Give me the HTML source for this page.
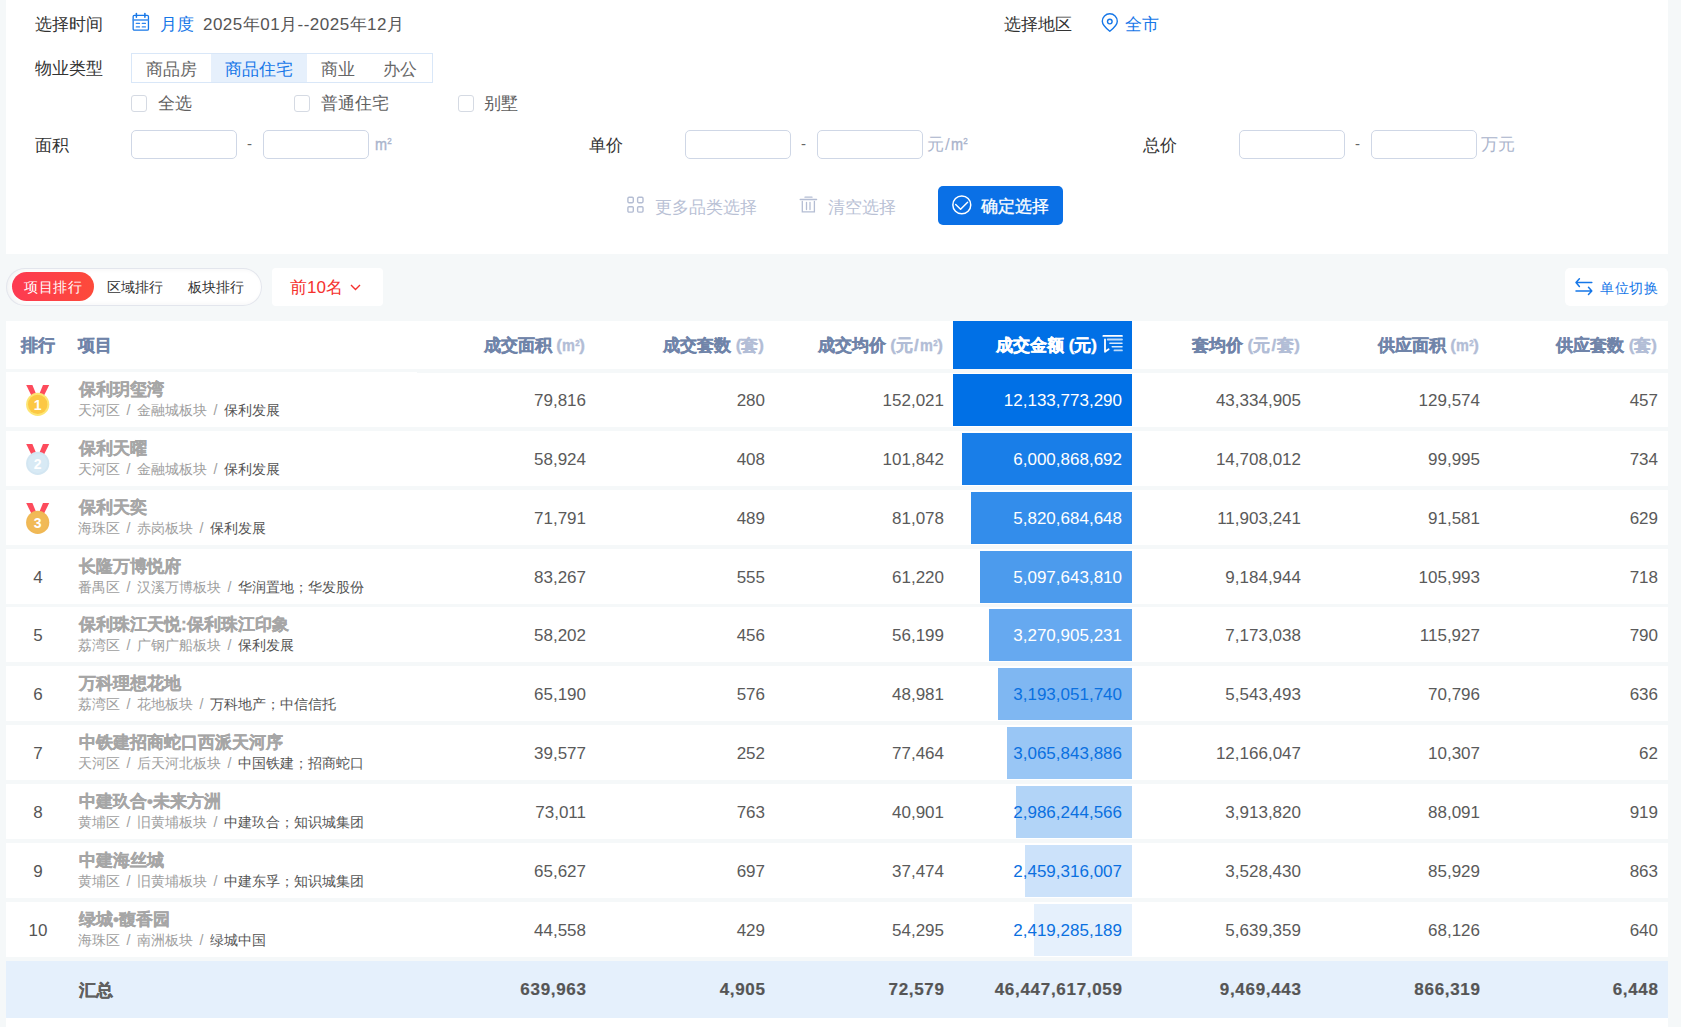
<!DOCTYPE html><html><head><meta charset="utf-8"><style>
*{box-sizing:border-box;margin:0;padding:0}
html,body{width:1681px;height:1027px;overflow:hidden}
body{position:relative;background:#f5f8f9;font-family:"Liberation Sans",sans-serif;color:#333;font-size:17px}
.a{position:absolute;white-space:nowrap}
.panel{position:absolute;left:6px;top:0;width:1662px;height:254px;background:#fff}
.lbl{font-size:17px;color:#333;line-height:20px}
.blue{color:#1677e8}
.seg{position:absolute;left:131px;top:53px;width:302px;height:30px;border:1px solid #d9e7f8;display:flex}
.seg div{height:28px;line-height:28px;padding:2px 14px 0;color:#666;font-size:17px}
.seg .on{background:#e6f0fc;color:#1677e8}
.cb{position:absolute;width:16px;height:16.5px;border:1px solid #d5dae3;border-radius:3px;background:#fff}
.cbt{font-size:17px;color:#606060;line-height:20px}
.inp{position:absolute;width:106px;height:29px;border:1px solid #cfd7e6;border-radius:5px;background:#fff}
.dash{font-size:15px;color:#666;line-height:20px}
.unit{font-size:17px;color:#aab4cc;line-height:20px}
.unit s{text-decoration:none;margin:0 1.5px 0 1px}
.btn2{font-size:17px;color:#b9c1d5;line-height:20px}
.ok{position:absolute;left:938px;top:186px;width:125px;height:39px;background:#0a70e6;border-radius:5px}
.pillwrap{position:absolute;left:6px;top:268px;width:256px;height:38px;border-radius:19px;background:#fff;box-shadow:inset 0 0 0 1px #e3e6ed, inset 3px 0 6px rgba(30,40,60,0.07)}
.pill{position:absolute;left:12px;top:272px;width:82px;height:29px;border-radius:15px;background:linear-gradient(90deg,#fd3a52,#fd4a3a);}
.tb{font-size:14px;line-height:18px}
.drop{position:absolute;left:272px;top:268px;width:111px;height:38px;background:#fff;border-radius:4px}
.unitbtn{position:absolute;left:1565px;top:268px;width:103px;height:38px;background:#fff;border-radius:5px}
.hdr{position:absolute;left:6px;top:321px;width:1662px;height:48px;background:#fff}
.ht{font-weight:bold;color:#7084a9;font-size:17px;line-height:20px;-webkit-text-stroke:0.35px currentColor}
.ht i{font-style:normal;color:#b2bdd6}
.ht s{text-decoration:none;margin:0 1.2px}
.hl{position:absolute;left:953px;top:321px;width:179px;height:48px;background:#0070e6}
.row{position:absolute;left:6px;width:1662px;height:55px;background:#fff}
.num{font-size:17px;color:#555;line-height:20px;text-align:right}
.pn{font-weight:bold;color:#a6a6a6;font-size:17px;line-height:20px;-webkit-text-stroke:0.3px currentColor}
.ps{font-size:14.2px;color:#9e9e9e;line-height:17px}
.ps s{text-decoration:none;display:inline-block;width:17px;text-align:center}
.ps b{font-weight:normal;color:#555}
.rk{font-size:17px;color:#555;line-height:20px;text-align:center;width:40px;padding-top:1.5px}
.bar{position:absolute;height:52px}
.sum{position:absolute;left:6px;top:961px;width:1662px;height:57px;background:#e5f0fc}
.sn{font-weight:bold;font-size:17px;color:#555;line-height:20px;text-align:right;letter-spacing:0.7px;margin-right:-0.7px;-webkit-text-stroke:0.2px #555}
.m2{display:inline-block;transform:scaleX(0.85);transform-origin:0 100%;margin-right:-0.2em;-webkit-text-stroke:0.4px currentColor}
.m2 u{text-decoration:none;position:relative;top:-0.55em;font-size:0.55em;margin-left:0.04em}
</style></head><body>
<div class="panel"></div>
<div class="a lbl" style="left:35px;top:15px">选择时间</div>
<svg class="a" style="left:131px;top:12px" width="20" height="21" viewBox="0 0 20 21" fill="none" stroke="#1677e8" stroke-linecap="round"><rect x="2.15" y="3.35" width="15.3" height="14.75" rx="1.2" stroke-width="1.3"/><line x1="2.2" y1="8" x2="17.4" y2="8" stroke-width="1.3" stroke="#3d8ef0"/><line x1="5.4" y1="1.6" x2="5.4" y2="5.3" stroke-width="1.5"/><line x1="13.9" y1="1.6" x2="13.9" y2="5.3" stroke-width="1.5"/><path d="M5.3 11.4 H8.5 M11.3 11.4 H14.4 M5.3 14.9 H8.5 M11.3 14.9 H14.4" stroke-width="1.3" stroke="#2f86ee"/></svg>
<div class="a lbl blue" style="left:160px;top:15px">月度</div>
<div class="a lbl" style="left:203px;top:15px;color:#555;font-size:17px;letter-spacing:0.48px">2025年01月--2025年12月</div>
<div class="a lbl" style="left:1004px;top:15px">选择地区</div>
<svg class="a" style="left:1100px;top:12px" width="20" height="21" viewBox="0 0 20 21" fill="none" stroke="#1677e8" stroke-width="1.4"><path d="M9.8 19.3 C6 16.3 2.3 13 2.3 9.3 A7.5 7.5 0 0 1 17.3 9.3 C17.3 13 13.6 16.3 9.8 19.3 Z" stroke-linejoin="round"/><circle cx="9.8" cy="9.6" r="2.3"/></svg>
<div class="a lbl blue" style="left:1125px;top:15px">全市</div>
<div class="a lbl" style="left:35px;top:59px">物业类型</div>
<div class="seg"><div>商品房</div><div class="on">商品住宅</div><div>商业</div><div>办公</div></div>
<div class="cb" style="left:131px;top:95px"></div><div class="a cbt" style="left:158px;top:94px">全选</div>
<div class="cb" style="left:294px;top:95px"></div><div class="a cbt" style="left:321px;top:94px">普通住宅</div>
<div class="cb" style="left:458px;top:95px"></div><div class="a cbt" style="left:484px;top:94px">别墅</div>
<div class="a lbl" style="left:35px;top:135.5px">面积</div>
<div class="inp" style="left:131px;top:130px"></div><div class="a dash" style="left:247px;top:133.5px">-</div><div class="inp" style="left:263px;top:130px"></div><div class="a unit" style="left:375px;top:134.5px"><span class="m2">m<u>2</u></span></div>
<div class="a lbl" style="left:589px;top:135.5px">单价</div><div class="inp" style="left:685px;top:130px"></div><div class="a dash" style="left:801px;top:133.5px">-</div><div class="inp" style="left:817px;top:130px"></div><div class="a unit" style="left:927px;top:134.5px">元<s>/</s><span class="m2">m<u>2</u></span></div>
<div class="a lbl" style="left:1143px;top:135.5px">总价</div><div class="inp" style="left:1239px;top:130px"></div><div class="a dash" style="left:1355px;top:133.5px">-</div><div class="inp" style="left:1371px;top:130px"></div><div class="a unit" style="left:1481px;top:134.5px">万元</div>
<svg class="a" style="left:626px;top:196px" width="19" height="18" viewBox="0 0 19 18" fill="none" stroke="#b4bdd3" stroke-width="1.4"><rect x="1.9" y="1.3" width="5.4" height="5.4" rx="1.1"/><rect x="11.6" y="1.3" width="5.4" height="5.4" rx="1.1"/><rect x="1.9" y="10.7" width="5.4" height="5.4" rx="1.1"/><rect x="11.6" y="10.7" width="5.4" height="5.4" rx="1.1"/></svg>
<div class="a btn2" style="left:655px;top:197.5px">更多品类选择</div>
<svg class="a" style="left:799px;top:195px" width="19" height="19" viewBox="0 0 19 19" fill="none" stroke="#b4bdd3" stroke-width="1.3" stroke-linecap="round"><path d="M6 2.2 H13"/><path d="M1.2 4.5 H17.6"/><path d="M3.3 6.3 V16.9 H15.4 V6.3"/><path d="M7.5 7.3 V14.6 M11 7.3 V14.6"/></svg>
<div class="a btn2" style="left:828px;top:197.5px">清空选择</div>
<div class="ok"></div>
<svg class="a" style="left:950px;top:193px" width="24" height="24" viewBox="0 0 24 24" fill="none" stroke="#fff" stroke-width="1.5" stroke-linecap="round" stroke-linejoin="round"><circle cx="11.8" cy="11.9" r="8.95"/><path d="M5.7 11.5 L10.6 16.2 L17.6 9.3"/></svg>
<div class="a lbl" style="left:981px;top:197px;color:#fff;-webkit-text-stroke:0.3px #fff">确定选择</div>
<div class="pillwrap"></div><div class="pill"></div>
<div class="a tb" style="left:24px;top:278px;color:#fff;letter-spacing:0.5px">项目排行</div>
<div class="a tb" style="left:107px;top:277.5px;color:#333">区域排行</div>
<div class="a tb" style="left:188px;top:277.5px;color:#333">板块排行</div>
<div class="drop"></div><div class="a lbl" style="left:290px;top:278px;color:#f5312e">前10名</div>
<svg class="a" style="left:350px;top:284px" width="11" height="7" viewBox="0 0 11 7" fill="none" stroke="#f5312e" stroke-width="1.4"><path d="M1 1 L5.5 5.5 L10 1"/></svg>
<div class="unitbtn"></div>
<svg class="a" style="left:1574px;top:276px" width="20" height="20" viewBox="0 0 20 20" fill="none" stroke="#1677e8" stroke-width="1.5" stroke-linecap="round" stroke-linejoin="round"><path d="M2 6.5 H17.8 M5.4 2.8 L2 6.5 L5.4 10.4"/><path d="M2 15.1 H17.8 M14.5 11.3 L17.8 15.1 L14.5 18.5"/></svg>
<div class="a tb" style="left:1600px;top:279px;color:#1677e8;letter-spacing:0.5px">单位切换</div>
<div class="hdr"></div><div class="hl"></div>
<div class="a ht" style="left:21px;top:336px">排行</div>
<div class="a ht" style="left:78px;top:336px">项目</div>
<div class="a ht" style="right:1096px;top:336px">成交面积<i> (<span class="m2">m<u>2</u></span>)</i></div>
<div class="a ht" style="right:917px;top:336px">成交套数<i> (套)</i></div>
<div class="a ht" style="right:738px;top:336px">成交均价<i> (元<s>/</s><span class="m2">m<u>2</u></span>)</i></div>
<div class="a ht" style="right:381px;top:336px">套均价<i> (元<s>/</s>套)</i></div>
<div class="a ht" style="right:202px;top:336px">供应面积<i> (<span class="m2">m<u>2</u></span>)</i></div>
<div class="a ht" style="right:24px;top:336px">供应套数<i> (套)</i></div>
<div class="a ht" style="right:584px;top:336px;color:#fff">成交金额 (元)</div>
<svg class="a" style="left:1102px;top:334px" width="21" height="20" viewBox="0 0 21 20" fill="none" stroke-linecap="round" stroke-linejoin="round"><path d="M1.3 1.9 H20" stroke="#fff" stroke-width="1.7"/><path d="M3 5.4 V17.8 L6.6 15.2" stroke="#fff" stroke-width="1.8"/><path d="M5.7 5.5 H20" stroke="rgba(255,255,255,0.75)" stroke-width="1.8"/><path d="M7.9 9.3 H20" stroke="rgba(255,255,255,0.85)" stroke-width="1.5"/><path d="M10.2 12.8 H20" stroke="rgba(255,255,255,0.85)" stroke-width="1.5"/><path d="M12.4 16.4 H20" stroke="rgba(255,255,255,0.75)" stroke-width="1.7"/></svg>
<div class="row" style="top:372px"></div>
<div class="bar" style="left:953px;top:374px;width:179px;background:rgba(0,112,230,1.00)"></div>
<div class="a" style="left:25px;top:385px"><svg class="medal" width="26" height="33" viewBox="0 0 26 33"><path d="M1.2 0 L7.4 0 L11.3 9.5 L6.6 11 Z" fill="#fd4b5c"/><path d="M24.2 0 L18 0 L14.1 9.5 L18.8 11 Z" fill="#fd4b5c"/><circle cx="12.7" cy="19.4" r="11.6" fill="#fde572"/><circle cx="12.7" cy="19.4" r="9.7" fill="#fcc843"/><text x="12.7" y="24.6" text-anchor="middle" font-family="Liberation Sans" font-weight="bold" font-size="14" fill="#fff">1</text></svg></div>
<div class="a pn" style="left:79px;top:380px">保利玥玺湾</div>
<div class="a ps" style="left:78px;top:402px">天河区<s>/</s>金融城板块<s>/</s><b>保利发展</b></div>
<div class="a num" style="right:1095px;top:391px;color:#5a5a5a">79,816</div>
<div class="a num" style="right:916px;top:391px;color:#5a5a5a">280</div>
<div class="a num" style="right:737px;top:391px;color:#5a5a5a">152,021</div>
<div class="a num" style="right:559px;top:391px;color:#fff">12,133,773,290</div>
<div class="a num" style="right:380px;top:391px;color:#5a5a5a">43,334,905</div>
<div class="a num" style="right:201px;top:391px;color:#5a5a5a">129,574</div>
<div class="a num" style="right:23px;top:391px;color:#5a5a5a">457</div>
<div class="row" style="top:431px"></div>
<div class="bar" style="left:962px;top:433px;width:170px;background:rgba(0,112,230,0.90)"></div>
<div class="a" style="left:25px;top:444px"><svg class="medal" width="26" height="33" viewBox="0 0 26 33"><path d="M1.2 0 L7.4 0 L11.3 9.5 L6.6 11 Z" fill="#fd4b5c"/><path d="M24.2 0 L18 0 L14.1 9.5 L18.8 11 Z" fill="#fd4b5c"/><circle cx="12.7" cy="19.4" r="11.6" fill="#d3e6f2"/><circle cx="12.7" cy="19.4" r="9.7" fill="#d8eaf5"/><text x="12.7" y="24.6" text-anchor="middle" font-family="Liberation Sans" font-weight="bold" font-size="14" fill="#fff">2</text></svg></div>
<div class="a pn" style="left:79px;top:439px">保利天曜</div>
<div class="a ps" style="left:78px;top:461px">天河区<s>/</s>金融城板块<s>/</s><b>保利发展</b></div>
<div class="a num" style="right:1095px;top:450px;color:#5a5a5a">58,924</div>
<div class="a num" style="right:916px;top:450px;color:#5a5a5a">408</div>
<div class="a num" style="right:737px;top:450px;color:#5a5a5a">101,842</div>
<div class="a num" style="right:559px;top:450px;color:#fff">6,000,868,692</div>
<div class="a num" style="right:380px;top:450px;color:#5a5a5a">14,708,012</div>
<div class="a num" style="right:201px;top:450px;color:#5a5a5a">99,995</div>
<div class="a num" style="right:23px;top:450px;color:#5a5a5a">734</div>
<div class="row" style="top:490px"></div>
<div class="bar" style="left:971px;top:492px;width:161px;background:rgba(0,112,230,0.80)"></div>
<div class="a" style="left:25px;top:503px"><svg class="medal" width="26" height="33" viewBox="0 0 26 33"><path d="M1.2 0 L7.4 0 L11.3 9.5 L6.6 11 Z" fill="#fd4b5c"/><path d="M24.2 0 L18 0 L14.1 9.5 L18.8 11 Z" fill="#fd4b5c"/><circle cx="12.7" cy="19.4" r="11.6" fill="#f0b855"/><circle cx="12.7" cy="19.4" r="9.7" fill="#f1ba57"/><text x="12.7" y="24.6" text-anchor="middle" font-family="Liberation Sans" font-weight="bold" font-size="14" fill="#fff">3</text></svg></div>
<div class="a pn" style="left:79px;top:498px">保利天奕</div>
<div class="a ps" style="left:78px;top:520px">海珠区<s>/</s>赤岗板块<s>/</s><b>保利发展</b></div>
<div class="a num" style="right:1095px;top:509px;color:#5a5a5a">71,791</div>
<div class="a num" style="right:916px;top:509px;color:#5a5a5a">489</div>
<div class="a num" style="right:737px;top:509px;color:#5a5a5a">81,078</div>
<div class="a num" style="right:559px;top:509px;color:#fff">5,820,684,648</div>
<div class="a num" style="right:380px;top:509px;color:#5a5a5a">11,903,241</div>
<div class="a num" style="right:201px;top:509px;color:#5a5a5a">91,581</div>
<div class="a num" style="right:23px;top:509px;color:#5a5a5a">629</div>
<div class="row" style="top:549px"></div>
<div class="bar" style="left:980px;top:551px;width:152px;background:rgba(0,112,230,0.70)"></div>
<div class="a rk" style="left:18px;top:566px">4</div>
<div class="a pn" style="left:79px;top:557px">长隆万博悦府</div>
<div class="a ps" style="left:78px;top:579px">番禺区<s>/</s>汉溪万博板块<s>/</s><b>华润置地；华发股份</b></div>
<div class="a num" style="right:1095px;top:568px;color:#5a5a5a">83,267</div>
<div class="a num" style="right:916px;top:568px;color:#5a5a5a">555</div>
<div class="a num" style="right:737px;top:568px;color:#5a5a5a">61,220</div>
<div class="a num" style="right:559px;top:568px;color:#fff">5,097,643,810</div>
<div class="a num" style="right:380px;top:568px;color:#5a5a5a">9,184,944</div>
<div class="a num" style="right:201px;top:568px;color:#5a5a5a">105,993</div>
<div class="a num" style="right:23px;top:568px;color:#5a5a5a">718</div>
<div class="row" style="top:607px"></div>
<div class="bar" style="left:989px;top:609px;width:143px;background:rgba(0,112,230,0.60)"></div>
<div class="a rk" style="left:18px;top:624px">5</div>
<div class="a pn" style="left:79px;top:615px">保利珠江天悦:保利珠江印象</div>
<div class="a ps" style="left:78px;top:637px">荔湾区<s>/</s>广钢广船板块<s>/</s><b>保利发展</b></div>
<div class="a num" style="right:1095px;top:626px;color:#5a5a5a">58,202</div>
<div class="a num" style="right:916px;top:626px;color:#5a5a5a">456</div>
<div class="a num" style="right:737px;top:626px;color:#5a5a5a">56,199</div>
<div class="a num" style="right:559px;top:626px;color:#fff">3,270,905,231</div>
<div class="a num" style="right:380px;top:626px;color:#5a5a5a">7,173,038</div>
<div class="a num" style="right:201px;top:626px;color:#5a5a5a">115,927</div>
<div class="a num" style="right:23px;top:626px;color:#5a5a5a">790</div>
<div class="row" style="top:666px"></div>
<div class="bar" style="left:998px;top:668px;width:134px;background:rgba(0,112,230,0.50)"></div>
<div class="a rk" style="left:18px;top:683px">6</div>
<div class="a pn" style="left:79px;top:674px">万科理想花地</div>
<div class="a ps" style="left:78px;top:696px">荔湾区<s>/</s>花地板块<s>/</s><b>万科地产；中信信托</b></div>
<div class="a num" style="right:1095px;top:685px;color:#5a5a5a">65,190</div>
<div class="a num" style="right:916px;top:685px;color:#5a5a5a">576</div>
<div class="a num" style="right:737px;top:685px;color:#5a5a5a">48,981</div>
<div class="a num" style="right:559px;top:685px;color:#0a70e0">3,193,051,740</div>
<div class="a num" style="right:380px;top:685px;color:#5a5a5a">5,543,493</div>
<div class="a num" style="right:201px;top:685px;color:#5a5a5a">70,796</div>
<div class="a num" style="right:23px;top:685px;color:#5a5a5a">636</div>
<div class="row" style="top:725px"></div>
<div class="bar" style="left:1007px;top:727px;width:125px;background:rgba(0,112,230,0.40)"></div>
<div class="a rk" style="left:18px;top:742px">7</div>
<div class="a pn" style="left:79px;top:733px">中铁建招商蛇口西派天河序</div>
<div class="a ps" style="left:78px;top:755px">天河区<s>/</s>后天河北板块<s>/</s><b>中国铁建；招商蛇口</b></div>
<div class="a num" style="right:1095px;top:744px;color:#5a5a5a">39,577</div>
<div class="a num" style="right:916px;top:744px;color:#5a5a5a">252</div>
<div class="a num" style="right:737px;top:744px;color:#5a5a5a">77,464</div>
<div class="a num" style="right:559px;top:744px;color:#0a70e0">3,065,843,886</div>
<div class="a num" style="right:380px;top:744px;color:#5a5a5a">12,166,047</div>
<div class="a num" style="right:201px;top:744px;color:#5a5a5a">10,307</div>
<div class="a num" style="right:23px;top:744px;color:#5a5a5a">62</div>
<div class="row" style="top:784px"></div>
<div class="bar" style="left:1016px;top:786px;width:116px;background:rgba(0,112,230,0.30)"></div>
<div class="a rk" style="left:18px;top:801px">8</div>
<div class="a pn" style="left:79px;top:792px">中建玖合•未来方洲</div>
<div class="a ps" style="left:78px;top:814px">黄埔区<s>/</s>旧黄埔板块<s>/</s><b>中建玖合；知识城集团</b></div>
<div class="a num" style="right:1095px;top:803px;color:#5a5a5a">73,011</div>
<div class="a num" style="right:916px;top:803px;color:#5a5a5a">763</div>
<div class="a num" style="right:737px;top:803px;color:#5a5a5a">40,901</div>
<div class="a num" style="right:559px;top:803px;color:#0a70e0">2,986,244,566</div>
<div class="a num" style="right:380px;top:803px;color:#5a5a5a">3,913,820</div>
<div class="a num" style="right:201px;top:803px;color:#5a5a5a">88,091</div>
<div class="a num" style="right:23px;top:803px;color:#5a5a5a">919</div>
<div class="row" style="top:843px"></div>
<div class="bar" style="left:1025px;top:845px;width:107px;background:rgba(0,112,230,0.20)"></div>
<div class="a rk" style="left:18px;top:860px">9</div>
<div class="a pn" style="left:79px;top:851px">中建海丝城</div>
<div class="a ps" style="left:78px;top:873px">黄埔区<s>/</s>旧黄埔板块<s>/</s><b>中建东孚；知识城集团</b></div>
<div class="a num" style="right:1095px;top:862px;color:#5a5a5a">65,627</div>
<div class="a num" style="right:916px;top:862px;color:#5a5a5a">697</div>
<div class="a num" style="right:737px;top:862px;color:#5a5a5a">37,474</div>
<div class="a num" style="right:559px;top:862px;color:#0a70e0">2,459,316,007</div>
<div class="a num" style="right:380px;top:862px;color:#5a5a5a">3,528,430</div>
<div class="a num" style="right:201px;top:862px;color:#5a5a5a">85,929</div>
<div class="a num" style="right:23px;top:862px;color:#5a5a5a">863</div>
<div class="row" style="top:902px"></div>
<div class="bar" style="left:1034px;top:904px;width:98px;background:rgba(0,112,230,0.10)"></div>
<div class="a rk" style="left:18px;top:919px">10</div>
<div class="a pn" style="left:79px;top:910px">绿城•馥香园</div>
<div class="a ps" style="left:78px;top:932px">海珠区<s>/</s>南洲板块<s>/</s><b>绿城中国</b></div>
<div class="a num" style="right:1095px;top:921px;color:#5a5a5a">44,558</div>
<div class="a num" style="right:916px;top:921px;color:#5a5a5a">429</div>
<div class="a num" style="right:737px;top:921px;color:#5a5a5a">54,295</div>
<div class="a num" style="right:559px;top:921px;color:#0a70e0">2,419,285,189</div>
<div class="a num" style="right:380px;top:921px;color:#5a5a5a">5,639,359</div>
<div class="a num" style="right:201px;top:921px;color:#5a5a5a">68,126</div>
<div class="a num" style="right:23px;top:921px;color:#5a5a5a">640</div>
<div class="a" style="left:417px;top:372px;width:1251px;height:1px;background:#f5f8f9"></div>
<div class="sum"></div>
<div class="a pn" style="left:79px;top:981px;color:#606060">汇总</div>
<div class="a sn" style="right:1095px;top:980px">639,963</div>
<div class="a sn" style="right:916px;top:980px">4,905</div>
<div class="a sn" style="right:737px;top:980px">72,579</div>
<div class="a sn" style="right:559px;top:980px">46,447,617,059</div>
<div class="a sn" style="right:380px;top:980px">9,469,443</div>
<div class="a sn" style="right:201px;top:980px">866,319</div>
<div class="a sn" style="right:23px;top:980px">6,448</div>
<div class="a" style="left:6px;top:1018px;width:1662px;height:9px;background:#fff"></div>
</body></html>
